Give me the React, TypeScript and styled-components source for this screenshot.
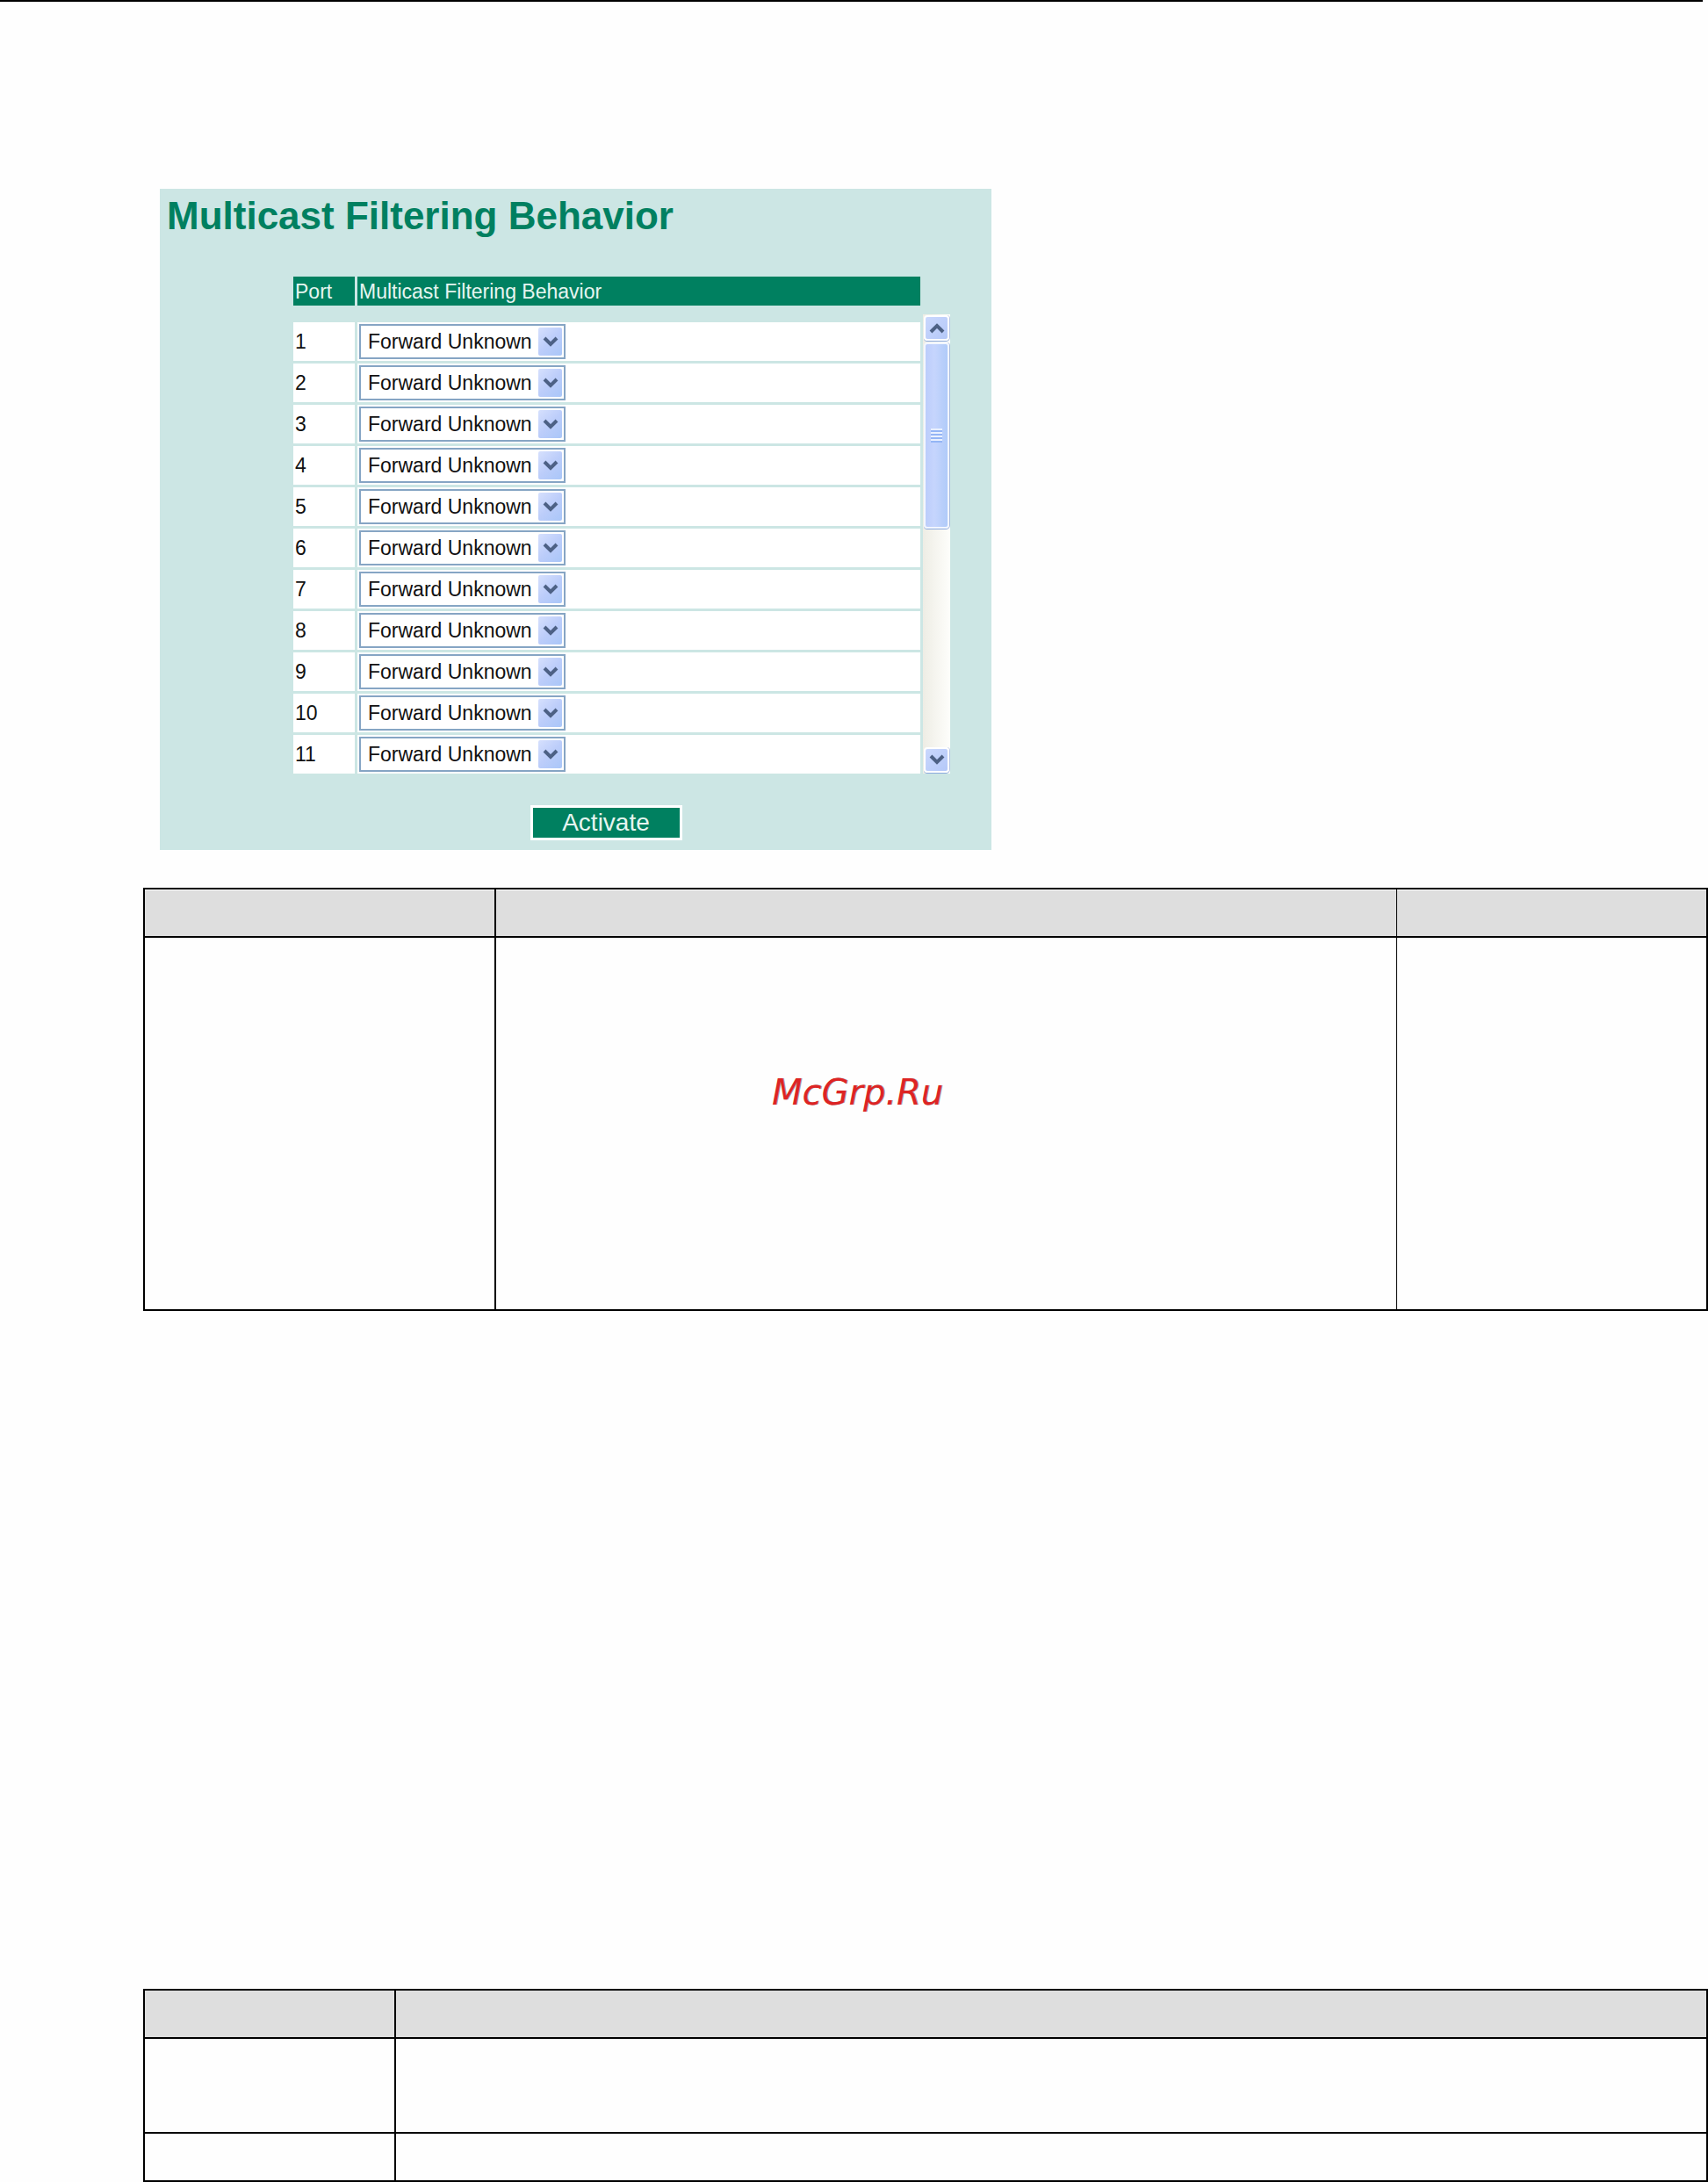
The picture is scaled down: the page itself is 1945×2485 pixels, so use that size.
import { useState } from "react";
import styled, { createGlobalStyle } from "styled-components";

const PORTS = [1, 2, 3, 4, 5, 6, 7, 8, 9, 10, 11]

const BEHAVIORS = ["Forward Unknown", "Filter Unknown"]

const Chevron = ({up}: {up?: boolean}) => (
    <svg width="18" height="13" viewBox="0 0 18 13" aria-hidden="true">
        <path
            d={up ? "M2 11L9 4L16 11" : "M2 2L9 9L16 2"}
            fill="none"
            stroke="#4d6185"
            strokeWidth="4"
        />
    </svg>
)

const PortRow = ({port}: {port: number}) => {
    const [behavior, setBehavior] = useState(BEHAVIORS[0])
    const selectId = `behavior-${port}`

    return(
        <tr>
            <PortCell><label htmlFor={selectId}>{port}</label></PortCell>
            <PortCell>
                <SelectBox>
                    <Select id={selectId} value={behavior} onChange={e => setBehavior(e.target.value)}>
                        {BEHAVIORS.map(item => (
                            <option key={item} value={item}>{item}</option>
                        ))}
                    </Select>
                    <SelectArrow><Chevron /></SelectArrow>
                </SelectBox>
            </PortCell>
        </tr>
    )
}

const App = () => {
    return(
        <>
            <GlobalStyle />
            <TopRule />
            <Page>
                <Panel>
                    <Title>Multicast Filtering Behavior</Title>
                    <PortsArea>
                        <PortsTable>
                            <thead>
                                <tr>
                                    <PortHead $width={70}>Port</PortHead>
                                    <PortHead>Multicast Filtering Behavior</PortHead>
                                </tr>
                            </thead>
                            <tbody>
                                <SpacerRow><td colSpan={2} /></SpacerRow>
                                {PORTS.map(port => <PortRow key={port} port={port} />)}
                            </tbody>
                        </PortsTable>
                        <Scrollbar>
                            <ScrollButton aria-label="Scroll up"><Chevron up /></ScrollButton>
                            <Thumb><Grip /></Thumb>
                            <ScrollSpace />
                            <ScrollButton aria-label="Scroll down"><Chevron /></ScrollButton>
                        </Scrollbar>
                    </PortsArea>
                    <Actions>
                        <ActivateButton>Activate</ActivateButton>
                    </Actions>
                </Panel>

                <SettingsTable>
                    <thead>
                        <tr>
                            <HeadCell $width={400} $inset />
                            <HeadCell $thin $inset />
                            <HeadCell $width={354} $inset />
                        </tr>
                    </thead>
                    <tbody>
                        <tr>
                            <Cell $height={425} />
                            <Cell $height={425} $thin><Watermark>McGrp.Ru</Watermark></Cell>
                            <Cell $height={425} />
                        </tr>
                    </tbody>
                </SettingsTable>

                <NotesTable>
                    <thead>
                        <tr>
                            <HeadCell $width={286} />
                            <HeadCell />
                        </tr>
                    </thead>
                    <tbody>
                        <tr>
                            <Cell $height={108} />
                            <Cell $height={108} />
                        </tr>
                        <tr>
                            <Cell $height={55} />
                            <Cell $height={55} />
                        </tr>
                    </tbody>
                </NotesTable>
            </Page>
        </>
    )
}
export default App

const GlobalStyle = createGlobalStyle`
    *{
        box-sizing: border-box;
    }
    body{
        margin: 0;
        background-color: #fefefe;
        font-family: "Liberation Sans", Arial, sans-serif;
    }
`

const TopRule = styled.hr`
    height: 2px;
    margin: 0 6px 0 0;
    border: none;
    background-color: #000;
`

const Page = styled.main`
    padding: 213px 0 0 163px;
`

const Panel = styled.section`
    max-width: 947px;
    margin-left: 19px;
    padding: 7px 0 11px;
    background-color: #cce6e4;
`

const Title = styled.h1`
    margin: 0 0 42px;
    padding-left: 8px;
    font-size: 44px;
    line-height: 48px;
    color: #008060;
`

const PortsArea = styled.div`
    display: flex;
    padding: 0 47px 0 149px;
`

const PortsTable = styled.table`
    flex: 1;
    table-layout: fixed;
    border-collapse: separate;
    border-spacing: 3px;
    font-size: 23px;
`

const PortHead = styled.th<{ $width?: number }>`
    width: ${({ $width }) => $width ? `${$width}px` : 'auto'};
    height: 33px;
    padding: 1px 2px 0;
    background-color: #008060;
    color: #e6f5f0;
    font-weight: normal;
    line-height: 32px;
    text-align: left;
`

const SpacerRow = styled.tr`
    height: 13px;

    td{
        padding: 0;
    }
`

const PortCell = styled.td`
    height: 44px;
    padding: 2px;
    background-color: #fff;
    color: #111;
`

const SelectBox = styled.div`
    position: relative;
    width: 235px;
`

const Select = styled.select`
    appearance: none;
    display: block;
    width: 100%;
    height: 40px;
    padding: 0 32px 0 8px;
    border: 2px solid #86a5c4;
    border-radius: 0;
    background-color: #fff;
    color: #111;
    font-family: inherit;
    font-size: 23px;
`

const SelectArrow = styled.span`
    position: absolute;
    top: 4px;
    right: 4px;
    bottom: 4px;
    display: flex;
    align-items: center;
    justify-content: center;
    width: 27px;
    border-radius: 2px;
    background: linear-gradient(135deg, #d6e0fd, #bccdfa 50%, #a9c6f8);
    pointer-events: none;
`

const Scrollbar = styled.div`
    display: flex;
    flex-direction: column;
    width: 31px;
    margin: 46px 0 3px;
    padding: 1px;
    background: linear-gradient(to right, #eeede5, #fefefb);
`

const ScrollButton = styled.button`
    display: flex;
    align-items: center;
    justify-content: center;
    height: 29px;
    padding: 0;
    border: 2px solid #fff;
    border-radius: 4px;
    background: linear-gradient(135deg, #cad8fd, #b4c8f8);
    box-shadow: 0 1px 0 #8ba9dc, 1px 0 0 #b4c5e2;
`

const Thumb = styled.div`
    display: flex;
    align-items: center;
    justify-content: center;
    height: 212px;
    margin-top: 2px;
    border: 2px solid #f2f6ff;
    border-radius: 4px;
    background: linear-gradient(to right, #bccdfb, #c6d5fd 40%, #b0cbf9);
    box-shadow: 0 1px 0 #8ba9dc, 1px 0 0 #a6bbdc;
`

const Grip = styled.span`
    width: 13px;
    height: 16px;
    background: repeating-linear-gradient(to bottom, #e9f0ff 0 2px, #94b5f5 2px 4px);
`

const ScrollSpace = styled.div`
    flex: 1;
`

const Actions = styled.div`
    display: flex;
    justify-content: center;
    padding: 33px 81px 0 150px;
`

const ActivateButton = styled.button`
    width: 173px;
    height: 40px;
    padding: 0;
    border: 3px solid #fff;
    background-color: #008060;
    color: #e6f5f0;
    font-family: inherit;
    font-size: 28px;
    line-height: 34px;
`

const DocTable = styled.table`
    width: 100%;
    table-layout: fixed;
    border-collapse: separate;
    border-spacing: 0;
    border: solid #000;
    border-width: 2px 0 0 2px;
`

const SettingsTable = styled(DocTable)`
    margin-top: 43px;
`

const NotesTable = styled(DocTable)`
    margin-top: 772px;
`

const HeadCell = styled.th<{ $width?: number, $thin?: boolean, $inset?: boolean }>`
    width: ${({ $width }) => $width ? `${$width}px` : 'auto'};
    height: 55px;
    padding: 0;
    border: solid #000;
    border-width: 0 ${({ $thin }) => $thin ? '1px' : '2px'} 2px 0;
    background-color: #dedede;
    box-shadow: ${({ $inset }) => $inset ? 'inset 0 1px 0 #fefefe' : 'none'};
`

const Cell = styled.td<{ $height: number, $thin?: boolean }>`
    height: ${({ $height }) => $height}px;
    padding: 0;
    border: solid #000;
    border-width: 0 ${({ $thin }) => $thin ? '1px' : '2px'} 2px 0;
    vertical-align: top;
`

const Watermark = styled.p`
    margin: 0;
    padding: 152px 0 0 314px;
    color: #dd2424;
    font-family: "DejaVu Sans", Verdana, sans-serif;
    font-size: 40px;
    font-style: oblique;
    line-height: 48px;
    text-shadow: 1px 0 0 #5559;
`
